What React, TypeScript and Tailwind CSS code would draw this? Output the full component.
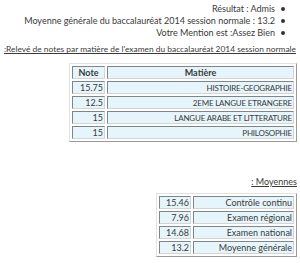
const font = { fontFamily: 'Lato, "Noto Sans", sans-serif' };

const notes = [
  { note: "15.75", matiere: "HISTOIRE-GEOGRAPHIE" },
  { note: "12.5", matiere: "2EME LANGUE ETRANGERE" },
  { note: "15", matiere: "LANGUE ARABE ET LITTERATURE" },
  { note: "15", matiere: "PHILOSOPHIE" },
];

const moyennes = [
  { note: "15.46", label: "Contrôle continu" },
  { note: "7.96", label: "Examen régional" },
  { note: "14.68", label: "Examen national" },
  { note: "13.2", label: "Moyenne générale" },
];

const tableCls =
  "border-separate border-spacing-[2px] border border-t-[#e2e2e2] border-l-[#e2e2e2] border-b-[#9a9a9a] border-r-[#9a9a9a]";
const cellCls =
  "bg-[#e6f5fb] border border-t-[#7d868a] border-l-[#7d868a] border-b-[#d4d4d4] border-r-[#d4d4d4] px-[1px] py-0 leading-[10px] h-[13px] text-right whitespace-nowrap";

const Bullet = ({ children }: { children: string }) => (
  <div className="flex items-center justify-end gap-[6px] h-[12px] whitespace-nowrap">
    <span>{children}</span>
    <span className="w-[4px] h-[4px] rounded-full bg-[#333]" />
  </div>
);

export default function App() {
  return (
    <div className="w-[300px] h-[263px] bg-white text-[#3a3a3a] text-[9px] overflow-hidden" style={font}>
      <div className="pt-[3px] pr-[15px] flex flex-col">
        <Bullet>Résultat : Admis</Bullet>
        <Bullet>Moyenne générale du baccalauréat 2014 session normale : 13.2</Bullet>
        <Bullet>Votre Mention est :Assez Bien</Bullet>
      </div>
      <p className="mt-[4px] pr-[4px] text-right underline leading-[12px] whitespace-nowrap text-[8.4px]">
        :Relevé de notes par matière de l'examen du baccalauréat 2014 session normale
      </p>
      <div className="flex justify-end pr-[3px] mt-[8px]">
        <table className={`w-[228px] ${tableCls}`}>
          <thead>
            <tr>
              <th className={`${cellCls} w-[33px] !text-center font-bold`}>Note</th>
              <th className={`${cellCls} !text-center font-bold`}>Matière</th>
            </tr>
          </thead>
          <tbody>
            {notes.map((r) => (
              <tr key={r.matiere}>
                <td className={cellCls}>{r.note}</td>
                <td className={`${cellCls} text-[8px] tracking-[-0.2px]`}>{r.matiere}</td>
              </tr>
            ))}
          </tbody>
        </table>
      </div>
      <p className="mt-[34px] pr-[3px] text-right underline leading-[12px]">: Moyennes</p>
      <div className="flex justify-end pr-[3px] mt-[5px]">
        <table className={`w-[141px] ${tableCls}`}>
          <tbody>
            {moyennes.map((r) => (
              <tr key={r.label}>
                <td className={`${cellCls} w-[32px]`}>{r.note}</td>
                <td className={cellCls}>{r.label}</td>
              </tr>
            ))}
          </tbody>
        </table>
      </div>
    </div>
  );
}
